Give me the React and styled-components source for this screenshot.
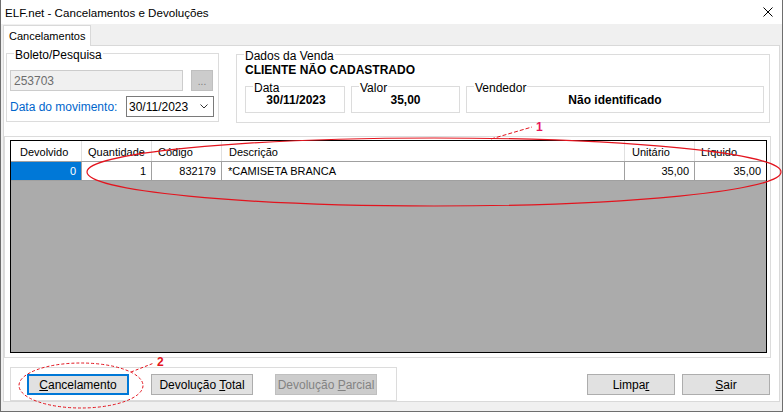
import React from 'react';
import styled, { createGlobalStyle } from 'styled-components';

const GlobalStyle = createGlobalStyle`
  html, body {
    margin: 0;
    padding: 0;
    background: #ffffff;
  }
  body {
    font-family: "Liberation Sans", Arial, sans-serif;
    font-size: 12px;
    color: #000;
  }
  * {
    box-sizing: border-box;
  }
`;

const Window = styled.div`
  position: relative;
  width: 783px;
  height: 412px;
  display: flex;
  flex-direction: column;
  background: #f0f0f0;
  border: 1px solid #6e6e6e;
  border-top: none;
  overflow: hidden;
`;

const TitleBar = styled.div`
  height: 24px;
  flex: none;
  display: flex;
  align-items: center;
  justify-content: space-between;
  padding: 0 9px 0 4px;
  background: #ffffff;
`;

const Title = styled.div`
  font-size: 11.6px;
  line-height: 14px;
  padding-top: 2px;
`;

const TabStrip = styled.div`
  height: 22px;
  flex: none;
  display: flex;
  align-items: flex-end;
  padding-left: 2px;
  margin-bottom: -1px;
`;

const Tab = styled.div`
  position: relative;
  z-index: 1;
  height: 21px;
  padding: 3px 5px 0 5px;
  background: #ffffff;
  border: 1px solid #d9d9d9;
  border-bottom: none;
  font-size: 11px;
  line-height: 14px;
`;

const TabPage = styled.div`
  width: 777px;
  height: 357px;
  margin-left: 2px;
  flex: none;
  display: flex;
  flex-direction: column;
  background: #ffffff;
  border: 1px solid #d9d9d9;
`;

const TopRow = styled.div`
  display: flex;
  align-items: flex-start;
  height: 70px;
  margin-top: 7px;
  flex: none;
`;

const GroupBox = styled.div`
  position: relative;
  width: ${(p) => p.$w}px;
  height: ${(p) => p.$h}px;
  margin-left: ${(p) => p.$ml || 0}px;
  margin-top: ${(p) => p.$mt || 0}px;
  border: 1px solid #dcdcdc;
  flex: none;
`;

const Legend = styled.span`
  position: absolute;
  top: -6px;
  left: 7px;
  padding: 0 1px;
  background: #ffffff;
  font-size: 12px;
  line-height: 14px;
  white-space: nowrap;
`;

const BoletoBody = styled.div`
  display: flex;
  flex-direction: column;
  gap: 5px;
  padding: 16px 0 0 3px;
`;

const FieldRow = styled.div`
  display: flex;
  align-items: center;
  gap: ${(p) => p.$gap || 0}px;
`;

const TextInput = styled.div`
  width: 173px;
  height: 21px;
  display: flex;
  align-items: center;
  padding-left: 3px;
  background: #f0f0f0;
  border: 1px solid #cccccc;
  color: #6d6d6d;
  font-size: 12px;
`;

const DotsButton = styled.div`
  width: 22px;
  height: 21px;
  display: flex;
  align-items: flex-end;
  justify-content: center;
  padding-bottom: 3px;
  background: #cccccc;
  border: 1px solid #bfbfbf;
  color: #7a7a7a;
  font-size: 10px;
  line-height: 10px;
`;

const BlueLabel = styled.span`
  color: #0066cc;
  font-size: 12px;
  width: 116px;
`;

const DatePicker = styled.div`
  width: 88px;
  height: 21px;
  display: flex;
  align-items: center;
  justify-content: space-between;
  padding: 0 5px 0 2px;
  border: 1px solid #7a7a7a;
  background: #ffffff;
  font-size: 12px;
`;

const DadosBody = styled.div`
  padding: 8px 0 0 8px;
`;

const ClientName = styled.div`
  font-weight: bold;
  font-size: 12px;
  line-height: 14px;
`;

const InfoRow = styled.div`
  display: flex;
  gap: 6px;
  margin-top: 9px;
`;

const InfoBox = styled.div`
  position: relative;
  width: ${(p) => p.$w}px;
  height: 27px;
  border: 1px solid #dcdcdc;
  padding-top: 6px;
  text-align: center;
`;

const InfoValue = styled.div`
  font-weight: bold;
  font-size: 12px;
  line-height: 14px;
  padding-left: ${(p) => p.$pl || 0}px;
`;

const GridBox = styled.div`
  width: 767px;
  height: 222px;
  margin-top: 13px;
  flex: none;
  padding: 3px 0 0 5px;
  border: 1px solid #dcdcdc;
`;

const Grid = styled.div`
  width: 757px;
  height: 213px;
  display: flex;
  flex-direction: column;
  border: 1px solid #000000;
  background: #ababab;
`;

const HeaderRow = styled.div`
  display: flex;
  height: 21px;
  flex: none;
  background: #ffffff;
  border-bottom: 1px solid #a0a0a0;
`;

const HeaderCell = styled.div`
  width: ${(p) => p.$w}px;
  flex: none;
  display: flex;
  align-items: center;
  padding-left: ${(p) => p.$pl}px;
  padding-top: 1px;
  border-right: ${(p) => (p.$last ? 'none' : '1px solid #e0e0e0')};
  font-size: 11px;
  white-space: nowrap;
  overflow: hidden;
`;

const DataRow = styled.div`
  display: flex;
  height: 19px;
  flex: none;
  background: #ffffff;
  border-bottom: 1px solid #a0a0a0;
`;

const DataCell = styled.div`
  width: ${(p) => p.$w}px;
  flex: none;
  display: flex;
  align-items: center;
  justify-content: ${(p) => (p.$align === 'right' ? 'flex-end' : 'flex-start')};
  padding: 0 5px 0 6px;
  background: ${(p) => (p.$selected ? '#0078d7' : '#ffffff')};
  color: ${(p) => (p.$selected ? '#ffffff' : '#000000')};
  border-right: ${(p) => (p.$last ? 'none' : '1px solid #a0a0a0')};
  font-size: 11px;
  white-space: nowrap;
`;

const BottomRow = styled.div`
  display: flex;
  align-items: flex-start;
  margin-top: 9px;
  padding: 0 9px 0 6px;
  flex: none;
`;

const ActionBox = styled.div`
  width: 387px;
  height: 34px;
  display: flex;
  gap: 22px;
  padding: 6px 0 0 16px;
  border: 1px solid #dcdcdc;
`;

const RightButtons = styled.div`
  display: flex;
  gap: 7px;
  margin-left: auto;
  margin-top: 7px;
`;

const Button = styled.div`
  width: ${(p) => p.$w}px;
  height: 21px;
  display: flex;
  align-items: center;
  justify-content: center;
  font-size: 12px;
  background: ${(p) => (p.$disabled ? '#cccccc' : '#e1e1e1')};
  color: ${(p) => (p.$disabled ? '#838383' : '#000000')};
  border: ${(p) =>
    p.$focused ? '2px solid #0078d7' : p.$disabled ? '1px solid #bfbfbf' : '1px solid #adadad'};
  u {
    text-decoration: underline;
    text-underline-offset: 1px;
  }
`;

const Overlay = styled.svg`
  position: absolute;
  left: 0;
  top: 0;
  pointer-events: none;
`;

const columns = [
  { key: 'dev', title: 'Devolvido', w: 71, pl: 9, value: '0', align: 'right', selected: true },
  { key: 'qtd', title: 'Quantidade', w: 70, pl: 6, value: '1', align: 'right' },
  { key: 'cod', title: 'Código', w: 70, pl: 6, value: '832179', align: 'right' },
  { key: 'desc', title: 'Descrição', w: 403, pl: 7, value: '*CAMISETA BRANCA', align: 'left' },
  { key: 'unit', title: 'Unitário', w: 70, pl: 7, value: '35,00', align: 'right' },
  { key: 'liq', title: 'Líquido', w: 71, pl: 6, value: '35,00', align: 'right', last: true },
];

function CloseIcon() {
  return (
    <svg width="10" height="10" viewBox="0 0 10 10">
      <path d="M0.5 0.5 L9.5 9.5 M9.5 0.5 L0.5 9.5" stroke="#000" strokeWidth="1" fill="none" />
    </svg>
  );
}

function Chevron() {
  return (
    <svg width="8" height="5" viewBox="0 0 8 5">
      <path d="M0.5 0.5 L4 4 L7.5 0.5" stroke="#333" strokeWidth="1" fill="none" />
    </svg>
  );
}

function Annotations() {
  return (
    <Overlay width="783" height="412" viewBox="0 0 783 412">
      <ellipse cx="433" cy="172" rx="347" ry="34" fill="none" stroke="#e3141e" strokeWidth="1.2" />
      <path d="M490 139 L531 127" stroke="#e3141e" strokeWidth="1" strokeDasharray="4 2" fill="none" />
      <text x="535" y="131" fill="#e8175d" fontFamily="Liberation Sans, Arial, sans-serif" fontWeight="bold" fontSize="12">
        1
      </text>
      <ellipse cx="80" cy="385.5" rx="62" ry="22.5" fill="none" stroke="#e3141e" strokeWidth="1" strokeDasharray="3 2" />
      <path d="M130 372 L153 363" stroke="#e3141e" strokeWidth="1" strokeDasharray="3 2" fill="none" />
      <text x="156" y="366" fill="#e3141e" fontFamily="Liberation Sans, Arial, sans-serif" fontWeight="bold" fontSize="12">
        2
      </text>
    </Overlay>
  );
}

export default function App() {
  return (
    <>
      <GlobalStyle />
      <Window>
        <TitleBar>
          <Title>ELF.net - Cancelamentos e Devoluções</Title>
          <CloseIcon />
        </TitleBar>
        <TabStrip>
          <Tab>Cancelamentos</Tab>
        </TabStrip>
        <TabPage>
          <TopRow>
            <GroupBox $w={213} $h={69} $ml={2}>
              <Legend>Boleto/Pesquisa</Legend>
              <BoletoBody>
                <FieldRow $gap={8}>
                  <TextInput>253703</TextInput>
                  <DotsButton>...</DotsButton>
                </FieldRow>
                <FieldRow>
                  <BlueLabel>Data do movimento:</BlueLabel>
                  <DatePicker>
                    <span>30/11/2023</span>
                    <Chevron />
                  </DatePicker>
                </FieldRow>
              </BoletoBody>
            </GroupBox>
            <GroupBox $w={534} $h={69} $ml={17} $mt={1}>
              <Legend>Dados da Venda</Legend>
              <DadosBody>
                <ClientName>CLIENTE NÃO CADASTRADO</ClientName>
                <InfoRow>
                  <InfoBox $w={100}>
                    <Legend>Data</Legend>
                    <InfoValue $pl={2}>30/11/2023</InfoValue>
                  </InfoBox>
                  <InfoBox $w={109}>
                    <Legend>Valor</Legend>
                    <InfoValue>35,00</InfoValue>
                  </InfoBox>
                  <InfoBox $w={298}>
                    <Legend>Vendedor</Legend>
                    <InfoValue>Não identificado</InfoValue>
                  </InfoBox>
                </InfoRow>
              </DadosBody>
            </GroupBox>
          </TopRow>

          <GridBox>
            <Grid>
              <HeaderRow>
                {columns.map((c) => (
                  <HeaderCell key={c.key} $w={c.w} $pl={c.pl} $last={c.last}>
                    {c.title}
                  </HeaderCell>
                ))}
              </HeaderRow>
              <DataRow>
                {columns.map((c) => (
                  <DataCell key={c.key} $w={c.w} $align={c.align} $selected={c.selected} $last={c.last}>
                    {c.value}
                  </DataCell>
                ))}
              </DataRow>
            </Grid>
          </GridBox>

          <BottomRow>
            <ActionBox>
              <Button $w={102} $focused>
                <span><u>C</u>ancelamento</span>
              </Button>
              <Button $w={102}>
                <span>Devolução <u>T</u>otal</span>
              </Button>
              <Button $w={102} $disabled>
                <span>Devolução <u>P</u>arcial</span>
              </Button>
            </ActionBox>
            <RightButtons>
              <Button $w={88}>
                <span>Limpa<u>r</u></span>
              </Button>
              <Button $w={88}>
                <span><u>S</u>air</span>
              </Button>
            </RightButtons>
          </BottomRow>
        </TabPage>
        <Annotations />
      </Window>
    </>
  );
}
